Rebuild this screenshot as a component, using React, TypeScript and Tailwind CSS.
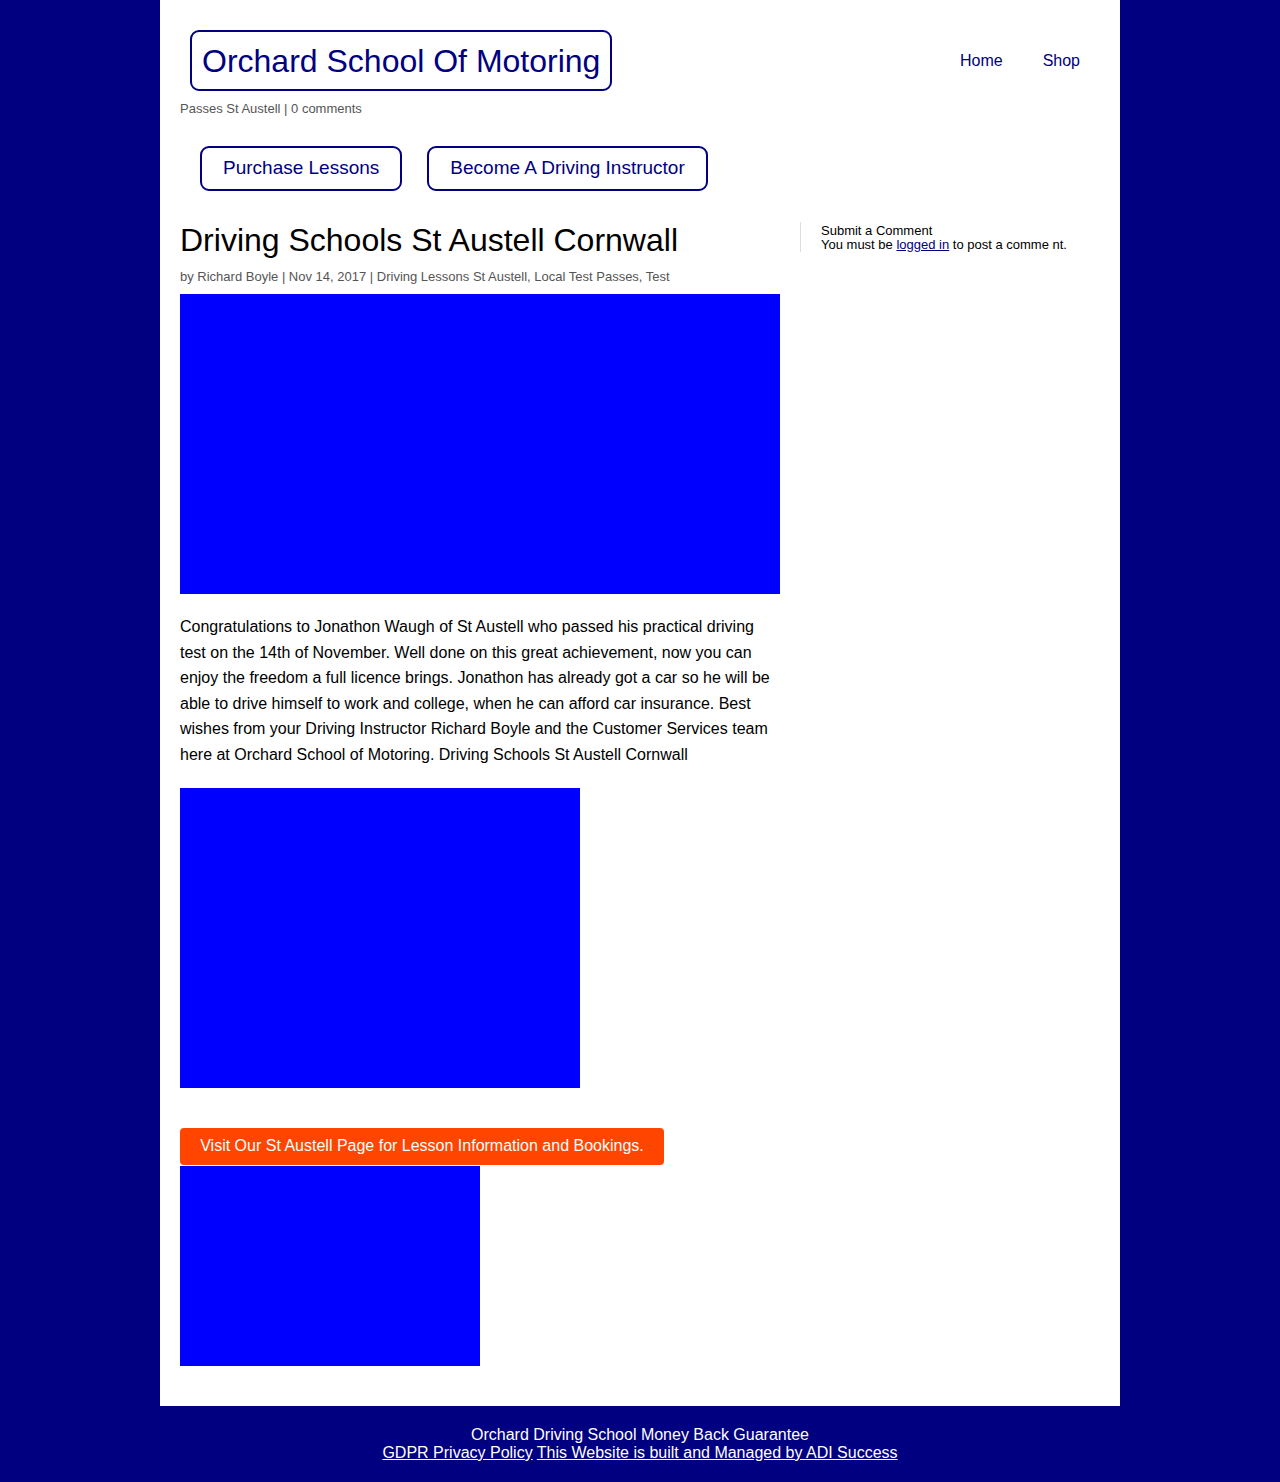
export default function App() {
  const font = { fontFamily: '"Liberation Sans", Arial, sans-serif' };
  return (
    <div className="min-h-[1482px] bg-[#000080]" style={font}>
      <div className="mx-auto w-[960px] bg-white px-5 pb-10">
        {/* header */}
        <div className="flex items-center justify-between pt-[30px]">
          <a className="ml-[10px] flex h-[61px] items-center rounded-[9px] border-2 border-[#000080] px-[10px] text-[32px] text-[#000080]">
            Orchard School Of Motoring
          </a>
          <nav className="mr-5 flex gap-10 text-base text-[#000080]">
            <a>Home</a>
            <a>Shop</a>
          </nav>
        </div>
        <div className="mt-[10px] text-[13px] leading-[15px] text-[#555]">Passes St Austell | 0 comments</div>

        <div className="mt-[30px] flex gap-[25px] pl-5">
          <a className="flex h-[45px] items-center rounded-[9px] border-2 border-[#000080] px-[21px] text-[19px] text-[#000080]">
            Purchase Lessons
          </a>
          <a className="flex h-[45px] items-center rounded-[9px] border-2 border-[#000080] px-[21px] text-[19px] text-[#000080]">
            Become A Driving Instructor
          </a>
        </div>

        <div className="mt-[30px] flex">
          <main className="w-[600px]">
            <h1 className="text-[32px] leading-[38px] text-black">Driving Schools St Austell Cornwall</h1>
            <div className="mt-[10px] text-[13px] leading-[15px] text-[#555]">
              by Richard Boyle | Nov 14, 2017 | Driving Lessons St Austell, Local Test Passes, Test
            </div>
            <div className="mt-[10px] h-[300px] w-[600px] bg-[#0000ff]" />
            <p className="mt-[20px] text-base leading-[25.6px] text-black">
              Congratulations to Jonathon Waugh of St Austell who passed his practical driving test on the 14th of November. Well done on this great achievement, now you can enjoy the freedom a full licence brings. Jonathon has already got a car so he will be able to drive himself to work and college, when he can afford car insurance. Best wishes from your Driving Instructor Richard Boyle and the Customer Services team here at Orchard School of Motoring. Driving Schools St Austell Cornwall
            </p>
            <div className="mt-[20px] h-[300px] w-[400px] bg-[#0000ff]" />
            <a className="mt-10 flex h-[37px] w-[484px] items-center justify-center rounded-[4px] bg-[#ff4500] text-base text-white">
              Visit Our St Austell Page for Lesson Information and Bookings.
            </a>
            <div className="mt-px h-[200px] w-[300px] bg-[#0000ff]" />
          </main>
          <aside className="ml-5 mt-px self-start border-l border-[#ddd] pl-5 text-[13px] leading-[14px] text-black">
            <div className="pt-[2px]">Submit a Comment</div>
            <div>
              You must be <a className="text-[#000080] underline">logged in</a> to post a comme nt.
            </div>
          </aside>
        </div>
      </div>
      <footer className="pt-[20px] pb-[18px] text-center text-base leading-[18px] text-white">
        <div>Orchard Driving School Money Back Guarantee</div>
        <div>
          <a className="underline">GDPR Privacy Policy</a> <a className="underline">This Website is built and Managed by ADI Success</a>
        </div>
      </footer>
    </div>
  );
}
